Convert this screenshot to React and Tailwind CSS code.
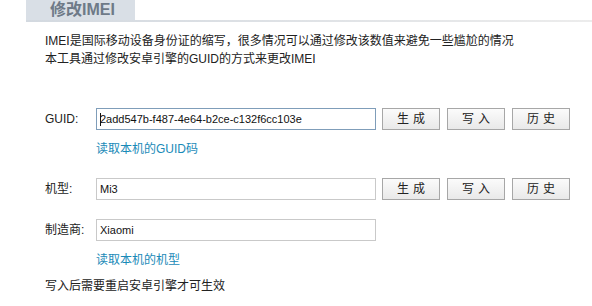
import React from 'react';

const font = { fontFamily: '"Liberation Sans", "Noto Sans CJK SC", sans-serif' };

function Btn({ children }) {
    return (
        <button className="h-[22px] w-[58px] border border-[#a7a7a7] bg-gradient-to-b from-[#fbfbfb] to-[#e9e9e9] text-[12px] text-[#222] tracking-[4px] pl-[4px]">
            {children}
        </button>
    );
}

function Field({ label, value, focused, buttons, link }) {
    return (
        <div className="flex flex-col">
            <div className="flex items-center h-[22px]">
                <div className="w-[51px] text-[12px] text-[#222]">{label}</div>
                <div className={`w-[280px] h-[22px] border ${focused ? 'border-[#7f9db9]' : 'border-[#c9c9c9]'} bg-white flex items-center pl-[3px] text-[11px] text-[#111]`}>
                    {focused && <span className="w-px h-[13px] bg-[#111] -mr-px" />}
                    {value}
                </div>
                {buttons && (
                    <div className="flex gap-[7px] ml-[6px]">
                        <Btn>生成</Btn>
                        <Btn>写入</Btn>
                        <Btn>历史</Btn>
                    </div>
                )}
            </div>
            {link && (
                <div className="ml-[51px] mt-[11px] text-[12px] text-[#1a8ab8] leading-[16px]">{link}</div>
            )}
        </div>
    );
}

export default function App() {
    return (
        <div className="w-[592px] h-[306px] bg-white relative overflow-hidden" style={font}>
            <div className="ml-[26px] flex flex-col">
                <div className="w-[109px] h-[20px] bg-[#d9dfe6] flex items-end justify-center">
                    <span className="text-[16px] font-bold text-[#6e7a88] leading-[20px] -mt-[4px] ml-[4px]">修改IMEI</span>
                </div>
                <div className="h-[2px] bg-gradient-to-r from-[#d3d9e0] to-[#ececec]" />
            </div>
            <div className="pl-[45px] pt-[10px] text-[12px] text-[#222] leading-[18px]">
                <div>IMEI是国际移动设备身份证的缩写，很多情况可以通过修改该数值来避免一些尴尬的情况</div>
                <div>本工具通过修改安卓引擎的GUID的方式来更改IMEI</div>
            </div>
            <div className="pl-[45px] pt-[40px] flex flex-col">
                <Field label="GUID:" value="2add547b-f487-4e64-b2ce-c132f6cc103e" focused buttons link="读取本机的GUID码" />
                <div className="h-[21px]" />
                <Field label="机型:" value="Mi3" buttons />
                <div className="h-[19px]" />
                <Field label="制造商:" value="Xiaomi" link="读取本机的机型" />
                <div className="mt-[10px] text-[12px] text-[#222] leading-[16px]">写入后需要重启安卓引擎才可生效</div>
            </div>
        </div>
    );
}
